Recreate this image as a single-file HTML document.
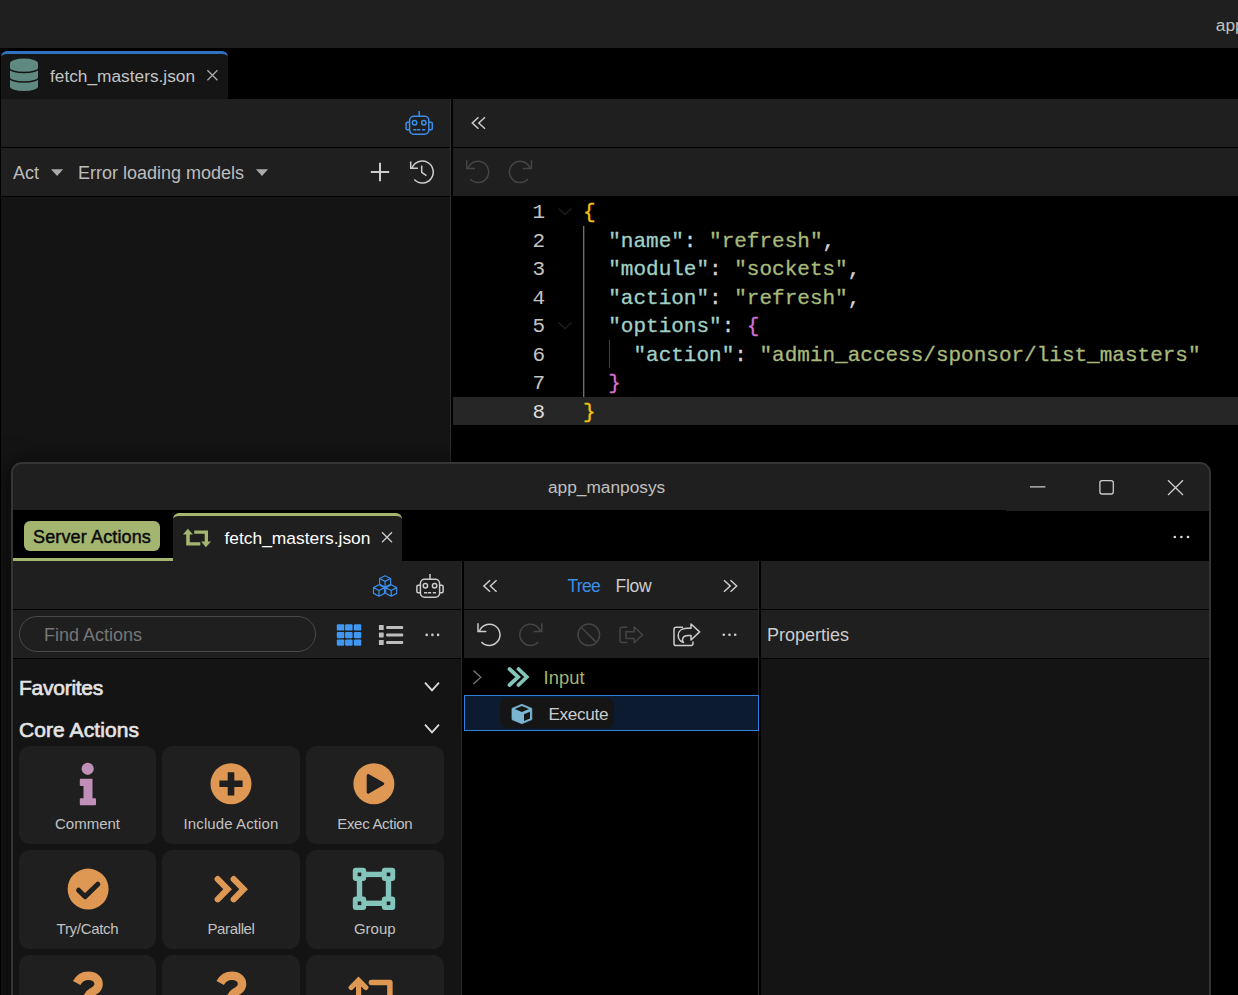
<!DOCTYPE html>
<html lang="en">
<head>
<meta charset="utf-8">
<title>app_manposys</title>
<style>
*{box-sizing:border-box;margin:0;padding:0}
html,body{width:1238px;height:995px;overflow:hidden;background:#000;}
body{position:relative;font-family:"Liberation Sans",sans-serif;color:#ccc;font-size:17px;}
.abs{position:absolute}
.t{position:absolute;white-space:nowrap;line-height:1;}
svg{position:absolute;overflow:visible}
/* ---------- main window ---------- */
#titlebar{left:0;top:0;width:1238px;height:48px;background:#1f1f1f}
#tabbar{left:0;top:48px;width:1238px;height:51px;background:#000}
#tab1{left:1px;top:51px;width:227px;height:48px;background:#151515;border-top:3px solid #2f72c4;border-radius:6px 6px 0 0}
#lp-t1{left:1px;top:99px;width:449px;height:48px;background:#1f1f1f}
#lp-t2{left:1px;top:148px;width:449px;height:48px;background:#1f1f1f}
#lp-body{left:1px;top:197px;width:449px;height:800px;background:#141414}
#rp-t1{left:453px;top:99px;width:785px;height:48px;background:#1f1f1f}
#rp-t2{left:453px;top:148px;width:785px;height:48px;background:#1f1f1f}
#code{left:453px;top:197px;width:785px;height:300px;background:#000;font-family:"Liberation Mono",monospace;font-size:21px;}
#code .ln{position:absolute;left:0;width:785px;height:28.5px;line-height:28.5px;white-space:pre;margin-top:2px}
#code .num{position:absolute;left:0;width:92px;text-align:right;color:#c4c4c4}
#code .num.cur{color:#ddd}
#code .src{position:absolute;left:130px;-webkit-text-stroke:0.3px}
.k{color:#a0d0c6}.s{color:#a8ba7a}.p{color:#d4d4d4}.b1{color:#f5c211}.b2{color:#d670d6}
/* ---------- floating window ---------- */
#win{left:11px;top:462px;width:1200px;height:560px;border:2px solid #353535;border-radius:11px;background:#1f1f1f;overflow:hidden;box-shadow:0 2px 22px 4px rgba(0,0,0,.5)}
#win .in{position:absolute;left:-13px;top:-464px;width:1238px;height:995px}

#w-title{left:13px;top:463px;width:1197px;height:47px;background:#1f1f1f}
#w-tabbar{left:13px;top:510px;width:1197px;height:51px;background:#000}
#w-pill{left:24px;top:521px;width:136px;height:30px;background:#a3b56e;border-radius:6px}
#w-ul{left:13px;top:558px;width:160px;height:3px;background:#a3b56e}
#w-tab{left:173px;top:513px;width:229px;height:48px;background:#1f1f1f;border-top:3px solid #a3b56e;border-radius:6px 6px 0 0}
.bar{background:#1f1f1f}
.card{position:absolute;width:137px;height:98px;background:#1f1f1f;border-radius:11px}
.card .lb{position:absolute;left:0;width:100%;text-align:center;top:70px;font-size:15px;line-height:1;color:#c2c2c2;white-space:nowrap}
</style>
</head>
<body>
<!-- main window -->
<div class="abs" id="titlebar"></div>
<div class="t" style="left:1215.800px;top:17px;font-size:17.3px;color:#c0c0c0">app_manposys</div>
<div class="abs" id="tabbar"></div>
<div class="abs" id="tab1"></div>
<div class="t" id="tab1txt" style="left:50px;top:68px;font-size:17.3px;color:#c4c4c4">fetch_masters.json</div>
<div class="abs" id="lp-t1"></div>
<div class="abs" id="lp-t2"></div>
<div class="abs" id="lp-body"></div>
<div class="t" style="left:13px;top:164px;font-size:18px;color:#bdbdbd">Act</div>
<div class="t" style="left:78px;top:164px;font-size:18px;color:#bdbdbd">Error loading models</div>
<div class="abs" style="left:450px;top:99px;width:1px;height:900px;background:#2e2e2e"></div>
<div class="abs" id="rp-t1"></div>
<div class="abs" id="rp-t2"></div>
<div class="abs" id="code">
  <div class="abs" style="left:0;top:200px;width:785px;height:28px;background:#262626"></div>
  <div class="ln" style="top:0px"><span class="num">1</span><span class="src"><span class="b1">{</span></span></div>
  <div class="ln" style="top:28.5px"><span class="num">2</span><span class="src">  <span class="k">"name"</span><span class="p">: </span><span class="s">"refresh"</span><span class="p">,</span></span></div>
  <div class="ln" style="top:57px"><span class="num">3</span><span class="src">  <span class="k">"module"</span><span class="p">: </span><span class="s">"sockets"</span><span class="p">,</span></span></div>
  <div class="ln" style="top:85.5px"><span class="num">4</span><span class="src">  <span class="k">"action"</span><span class="p">: </span><span class="s">"refresh"</span><span class="p">,</span></span></div>
  <div class="ln" style="top:114px"><span class="num">5</span><span class="src">  <span class="k">"options"</span><span class="p">: </span><span class="b2">{</span></span></div>
  <div class="ln" style="top:142.5px"><span class="num">6</span><span class="src">    <span class="k">"action"</span><span class="p">: </span><span class="s">"admin_access/sponsor/list_masters"</span></span></div>
  <div class="ln" style="top:171px"><span class="num">7</span><span class="src">  <span class="b2">}</span></span></div>
  <div class="ln" style="top:199.5px"><span class="num cur">8</span><span class="src"><span class="b1">}</span></span></div>
</div>

<svg id="svg-main" width="1238" height="995" viewBox="0 0 1238 995" style="left:0;top:0">
<!-- database icon -->
<g>
<path d="M10 63.5 a14 4.9 0 0 1 28 0 V86.400 a14 4.600 0 0 1 -28 0 Z" fill="#5f8a82"/>
<path d="M9.500 68.200 a14.500 4.200 0 0 0 29 0 M9.500 77.800 a14.500 4.200 0 0 0 29 0" fill="none" stroke="#151515" stroke-width="1.5"/>
</g>
<path d="M207.4 70.3 L217.4 80.3 M217.4 70.3 L207.4 80.3" fill="none" stroke="#aaa" stroke-width="1.3"/>
<g fill="none" stroke="#3b8eea" stroke-width="1.5" stroke-linecap="butt" stroke-linejoin="round">
<rect x="409.6" y="116.2" width="19.2" height="18" rx="4.2"/>
<path d="M419.2 111 V116.2"/>
<path d="M409.6 122.2 h-2.3 a1.2 1.2 0 0 0 -1.2 1.2 v5.2 a1.2 1.2 0 0 0 1.2 1.2 h2.3"/>
<path d="M428.8 122.2 h2.3 a1.2 1.2 0 0 1 1.2 1.2 v5.2 a1.2 1.2 0 0 1 -1.2 1.2 h-2.3"/>
<circle cx="414.6" cy="122.8" r="2.2"/>
<circle cx="423.8" cy="122.8" r="2.2"/>
<path d="M413.2 129.8 h3.2 M417.1 129.8 h3.3 M422.0 129.8 h3.2" stroke-width="1.6"/>
</g>
<path d="M478.5 117.3 L472.3 123 L478.5 128.7 M485.0 117.3 L478.8 123 L485.0 128.7" fill="none" stroke="#ccc" stroke-width="1.5"/>
<path d="M51 169.2 h12.2 l-6.1 6.8 z" fill="#aaa"/>
<path d="M255.9 169.2 h12.2 l-6.1 6.8 z" fill="#aaa"/>
<path d="M370.8 172 H389.2 M380 162.8 V181.2" stroke="#ccc" stroke-width="2" fill="none"/>
<!-- history -->
<g fill="none" stroke="#ccc" stroke-width="1.5">
<path d="M410.7 161.4 V168.3 H418"/>
<path d="M411.900 168.300 A11 11 0 1 1 414.300 179.600"/>
<path d="M421.700 165.400 V172.300 L426.400 175.600"/>
</g>
<g fill="none" stroke="#454545" stroke-width="1.5" stroke-linecap="butt" stroke-linejoin="miter">
<path d="M466.7 160.3 V168.6 H475.1"/>
<path d="M468.0 168.6 A10.6 10.6 0 1 1 470.2 179.0"/></g>
<g fill="none" stroke="#454545" stroke-width="1.5" stroke-linecap="butt" stroke-linejoin="miter">
<path d="M531.4 160.3 V168.6 H523.0"/>
<path d="M530.1 168.6 A10.6 10.6 0 1 0 527.9 179.0"/></g>
<!-- fold chevrons -->
<path d="M558.500 208.500 l6.500 6 l6.500 -6 M558.500 322.500 l6.500 6 l6.500 -6" fill="none" stroke="#1e1e1e" stroke-width="1.3"/>
<!-- indent guides -->
<path d="M583.700 226 V397" stroke="#747474" stroke-width="1.3"/>
<path d="M609.500 340 V368" stroke="#404040" stroke-width="1"/>
</svg>
<!-- floating window -->
<div class="abs" id="win"><div class="in">

<div class="abs" id="w-title"></div>
<div class="abs" style="left:13px;top:510px;width:1197px;height:490px;background:#000"></div>
<div class="t" id="w-titletxt" style="left:548px;top:479px;font-size:17.3px;color:#c0c0c0">app_manposys</div>
<div class="abs" id="w-tabbar"></div>
<div class="abs" style="left:1006px;top:510px;width:204px;height:1px;background:#1f1f1f"></div>
<div class="abs" id="w-pill"></div>
<div class="t" id="w-pilltxt" style="left:33px;top:527.500px;font-size:18px;letter-spacing:0.14px;color:#0a0a0a;-webkit-text-stroke:0.45px #0a0a0a">Server Actions</div>
<div class="abs" id="w-ul"></div>
<div class="abs" id="w-tab"></div>
<div class="t" id="w-tabtxt" style="left:224.500px;top:530px;font-size:17.4px;color:#fff">fetch_masters.json</div>
<!-- left panel -->
<div class="abs bar" style="left:13px;top:561px;width:448px;height:48px"></div>
<div class="abs bar" style="left:13px;top:610px;width:448px;height:48px"></div>
<div class="abs" style="left:13px;top:659px;width:448px;height:340px;background:#141414"></div>
<div class="abs" style="left:19px;top:616px;width:297px;height:36px;border:1px solid #4a4a4a;border-radius:18px;background:#1f1f1f"></div>
<div class="t" style="left:44px;top:626px;font-size:18px;color:#777">Find Actions</div>
<div class="t" id="fav" style="left:19px;top:676.600px;font-size:21px;letter-spacing:-0.26px;color:#e4e4e4;-webkit-text-stroke:0.65px #e4e4e4">Favorites</div>
<div class="t" id="core" style="left:19px;top:718.600px;font-size:21px;letter-spacing:0.08px;color:#e4e4e4;-webkit-text-stroke:0.65px #e4e4e4">Core Actions</div>
<div class="card" style="left:19px;top:746px"><div class="lb">Comment</div></div>
<div class="card" style="left:162px;top:746px;width:138px"><div class="lb" style="letter-spacing:0.1px">Include Action</div></div>
<div class="card" style="left:306px;top:746px;width:137.5px"><div class="lb" style="letter-spacing:-0.3px">Exec Action</div></div>
<div class="card" style="left:19px;top:850px;height:99px"><div class="lb" style="top:71px;letter-spacing:-0.3px">Try/Catch</div></div>
<div class="card" style="left:162px;top:850px;height:99px;width:138px"><div class="lb" style="top:71px;letter-spacing:-0.35px">Parallel</div></div>
<div class="card" style="left:306px;top:850px;height:99px;width:137.5px"><div class="lb" style="top:71px">Group</div></div>
<div class="card" style="left:19px;top:955px"></div>
<div class="card" style="left:162px;top:955px;width:138px"></div>
<div class="card" style="left:306px;top:955px;width:137.5px"></div>
<!-- separators -->
<div class="abs" style="left:461px;top:561px;width:3px;height:440px;background:#000"></div>
<div class="abs" style="left:758px;top:561px;width:3px;height:440px;background:#000"></div>
<div class="abs" style="left:461px;top:561px;width:1px;height:440px;background:#292929"></div>
<div class="abs" style="left:758px;top:561px;width:1px;height:440px;background:#292929"></div>
<!-- middle panel -->
<div class="abs bar" style="left:464px;top:561px;width:294px;height:48px"></div>
<div class="abs bar" style="left:464px;top:610px;width:294px;height:48px"></div>
<div class="abs" style="left:464px;top:658px;width:294px;height:340px;background:#000"></div>
<div class="t" style="left:567.500px;top:577.500px;font-size:17.5px;letter-spacing:-0.7px;color:#3b8eea">Tree</div>
<div class="t" style="left:615.500px;top:577.500px;font-size:17.5px;letter-spacing:-0.28px;color:#ccc">Flow</div>
<div class="t" style="left:543.500px;top:669px;font-size:18.4px;letter-spacing:0.05px;color:#a3b56e">Input</div>
<div class="abs" style="left:464px;top:695px;width:295px;height:36px;background:#0c1b30;border:1px solid #2f7fdd"></div>
<div class="abs" style="left:500px;top:698px;width:114px;height:30px;background:#151515;border-radius:7px"></div>
<div class="t" style="left:548.500px;top:705.500px;font-size:17.2px;letter-spacing:-0.35px;color:#ccc">Execute</div>
<!-- right panel -->
<div class="abs bar" style="left:761px;top:561px;width:449px;height:48px"></div>
<div class="abs bar" style="left:761px;top:610px;width:449px;height:48px"></div>
<div class="abs" style="left:761px;top:659px;width:449px;height:340px;background:#141414"></div>
<div class="t" style="left:767px;top:626px;font-size:18px;color:#ccc">Properties</div>
<svg id="svg-win" width="1238" height="995" viewBox="0 0 1238 995" style="left:0;top:0">
<!-- window controls -->
<path d="M1030 486.8 H1045.4" stroke="#ccc" stroke-width="1.3"/>
<rect x="1099.9" y="480.6" width="13.4" height="13.4" rx="2.2" fill="none" stroke="#ccc" stroke-width="1.3"/>
<path d="M1168 480.2 L1183 495 M1183 480.2 L1168 495" stroke="#ccc" stroke-width="1.3"/>
<g transform="translate(182.9 528.7) scale(1)" fill="#a3b56e">
<path d="M5 0 L10.1 5.9 H6.9 V13.6 H17.4 V16.8 H3.3 V5.9 H0 Z"/>
<path d="M11.3 1.9 H25.1 V12.8 H28.1 L23 18.5 L18.2 12.8 H21.8 V5.1 H11.3 Z"/>
</g>
<path d="M382 532.3 L392 542.3 M392 532.3 L382 542.3" fill="none" stroke="#ccc" stroke-width="1.3"/>
<circle cx="1174.8" cy="537" r="1.3" fill="#ddd"/><circle cx="1181.4" cy="537" r="1.3" fill="#ddd"/><circle cx="1188.0" cy="537" r="1.3" fill="#ddd"/>
<!-- cubes -->
<g fill="none" stroke="#3b8eea" stroke-width="1.2" stroke-linejoin="round">
<path d="M385.1 575.7 L390.6 578.55 V584.25 L385.1 587.10 L379.6 584.25 V578.55 Z M379.6 578.55 L385.1 581.40 L390.6 578.55 M385.1 581.40 V587.10"/>
<path d="M379 584.8 L384.5 587.65 V593.35 L379 596.20 L373.5 593.35 V587.65 Z M373.5 587.65 L379 590.50 L384.5 587.65 M379 590.50 V596.20"/>
<path d="M391.2 584.8 L396.7 587.65 V593.35 L391.2 596.20 L385.7 593.35 V587.65 Z M385.7 587.65 L391.2 590.50 L396.7 587.65 M391.2 590.50 V596.20"/>
</g>
<g fill="none" stroke="#ccc" stroke-width="1.5" stroke-linecap="butt" stroke-linejoin="round">
<rect x="420.4" y="579.2" width="19.2" height="18" rx="4.2"/>
<path d="M430 574 V579.2"/>
<path d="M420.4 585.2 h-2.3 a1.2 1.2 0 0 0 -1.2 1.2 v5.2 a1.2 1.2 0 0 0 1.2 1.2 h2.3"/>
<path d="M439.6 585.2 h2.3 a1.2 1.2 0 0 1 1.2 1.2 v5.2 a1.2 1.2 0 0 1 -1.2 1.2 h-2.3"/>
<circle cx="425.4" cy="585.8" r="2.2"/>
<circle cx="434.6" cy="585.8" r="2.2"/>
<path d="M424.0 592.8 h3.2 M427.9 592.8 h3.3 M432.8 592.8 h3.2" stroke-width="1.6"/>
</g>
<!-- grid icon -->
<g fill="#3f97f2">
<rect x="336.8" y="624.3" width="7.5" height="6.3" rx="1.2"/><rect x="345.1" y="624.3" width="7.5" height="6.3" rx="1.2"/><rect x="353.8" y="624.3" width="7.5" height="6.3" rx="1.2"/><rect x="336.8" y="631.9" width="7.5" height="6.3" rx="1.2"/><rect x="345.1" y="631.9" width="7.5" height="6.3" rx="1.2"/><rect x="353.8" y="631.9" width="7.5" height="6.3" rx="1.2"/><rect x="336.8" y="639.4" width="7.5" height="6.3" rx="1.2"/><rect x="345.1" y="639.4" width="7.5" height="6.3" rx="1.2"/><rect x="353.8" y="639.4" width="7.5" height="6.3" rx="1.2"/>
</g>
<!-- list icon -->
<g fill="#bdbdbd">
<rect x="378.9" y="625.0" width="4.8" height="5" rx="0.6"/><rect x="386.1" y="626.0" width="17.1" height="3" rx="1"/><rect x="378.9" y="632.4" width="4.8" height="5" rx="0.6"/><rect x="386.1" y="633.4" width="17.1" height="3" rx="1"/><rect x="378.9" y="640.0" width="4.8" height="5" rx="0.6"/><rect x="386.1" y="641.0" width="17.1" height="3" rx="1"/>
</g>
<circle cx="426.7" cy="634.9" r="1.3" fill="#ccc"/><circle cx="432.4" cy="634.9" r="1.3" fill="#ccc"/><circle cx="438.1" cy="634.9" r="1.3" fill="#ccc"/>
<path d="M425 682.7 L432 690.3 L439 682.7" fill="none" stroke="#ddd" stroke-width="1.8"/>
<path d="M425 724.7 L432 732.3 L439 724.7" fill="none" stroke="#ddd" stroke-width="1.8"/>
<!-- card icons -->
<g fill="#c08fb8">
<circle cx="87.7" cy="768.8" r="6.1"/>
<path d="M80.800 778.800 H92.500 V798.200 H95 a1 1 0 0 1 1 1 V804.200 a1 1 0 0 1 -1 1 H80.800 a1 1 0 0 1 -1 -1 V799.200 a1 1 0 0 1 1 -1 H83.500 V786 H80.800 a1 1 0 0 1 -1 -1 V779.800 a1 1 0 0 1 1 -1 Z"/>
</g>
<circle cx="231" cy="783.8" r="20.5" fill="#de9853"/>
<path d="M219.400 783.800 H242.600 M231 772.200 V795.400" stroke="#1f1f1f" stroke-width="6.6" stroke-linecap="butt" fill="none"/>
<circle cx="373.9" cy="783.8" r="20.5" fill="#de9853"/>
<path d="M368.200 775.600 L382.800 783.800 L368.200 792.200 Z" fill="#1f1f1f" stroke="#1f1f1f" stroke-width="3" stroke-linejoin="round"/>
<circle cx="88.1" cy="889.1" r="20.5" fill="#de9853"/>
<path d="M78.600 890.200 L85 896.600 L97.800 884.200" stroke="#1f1f1f" stroke-width="5" stroke-linecap="round" stroke-linejoin="round" fill="none"/>
<path d="M217.700 879.100 L227.600 889.200 L217.700 899.300 M233.700 879.100 L243.600 889.200 L233.700 899.300" stroke="#de9853" stroke-width="6.200" stroke-linecap="round" stroke-linejoin="miter" fill="none"/>
<!-- group -->
<rect x="359.5" y="874.4" width="29" height="28.9" fill="none" stroke="#83c5bb" stroke-width="5.4"/>
<g fill="#83c5bb">
<rect x="352.8" y="867.7" width="13.4" height="13.4" rx="3"/><rect x="352.8" y="896.6" width="13.4" height="13.4" rx="3"/><rect x="381.8" y="867.7" width="13.4" height="13.4" rx="3"/><rect x="381.8" y="896.6" width="13.4" height="13.4" rx="3"/>
</g>
<g fill="#1f1f1f">
<rect x="357.7" y="872.6" width="3.6" height="3.6"/><rect x="357.7" y="901.5" width="3.6" height="3.6"/><rect x="386.7" y="872.6" width="3.6" height="3.6"/><rect x="386.7" y="901.5" width="3.6" height="3.6"/>
</g>
<path d="M76.7 983.0 C79.3 978.2 83.5 975.7 88.4 975.7 C94.2 975.7 98.6 979.3 98.6 984.0 C98.6 988.6 95.0 990.4 91.8 992.2 C89.6 993.5 88.0 995.0 87.4 997.5" fill="none" stroke="#de9853" stroke-width="8.4" stroke-linecap="butt"/>
<path d="M220.2 983.0 C222.8 978.2 227.0 975.7 231.9 975.7 C237.7 975.7 242.1 979.3 242.1 984.0 C242.1 988.6 238.5 990.4 235.3 992.2 C233.1 993.5 231.5 995.0 230.9 997.5" fill="none" stroke="#de9853" stroke-width="8.4" stroke-linecap="butt"/>
<path d="M351.200 987.500 L358.500 980.200 L365.800 987.500 M358.600 981 V1000" stroke="#de9853" stroke-width="5.200" stroke-linecap="round" stroke-linejoin="miter" fill="none"/>
<path d="M371.400 982.450 H389.900 V1000" stroke="#de9853" stroke-width="5.500" stroke-linecap="round" stroke-linejoin="round" fill="none"/>
<!-- middle toolbar -->
<path d="M490.1 580.3 L483.9 586 L490.1 591.7 M496.6 580.3 L490.4 586 L496.6 591.7" fill="none" stroke="#ccc" stroke-width="1.5" />
<path d="M724.0 580.3 L730.2 586 L724.0 591.7 M730.5 580.3 L736.7 586 L730.5 591.7" fill="none" stroke="#ccc" stroke-width="1.5" />
<g fill="none" stroke="#ccc" stroke-width="1.5">
<path d="M478 623.2 V631.5 H486.4"/>
<path d="M479.3 631.5 A10.6 10.6 0 1 1 481.5 641.9"/></g>
<g fill="none" stroke="#454545" stroke-width="1.5">
<path d="M541.8 623.2 V631.5 H533.4"/>
<path d="M540.5 631.5 A10.6 10.6 0 1 0 538.3 641.9"/></g>
<g fill="none" stroke="#454545" stroke-width="1.5">
<circle cx="588.8" cy="634.8" r="10.8"/>
<path d="M581.200 627.200 L596.400 642.400"/>
<path d="M627.400 627.200 H622 a2 2 0 0 0 -2 2 V640.500 a2 2 0 0 0 2 2 H627.400"/>
<path d="M626 631.800 H634.200 V627 L642.600 634.800 L634.200 642.800 V638.400 H626 Z" stroke-linejoin="round"/>
</g>
<g fill="none" stroke="#ccc" stroke-width="1.5" stroke-linejoin="round">
<path d="M683 627.200 H676.200 a2.200 2.200 0 0 0 -2.200 2.200 V643.400 a2.200 2.200 0 0 0 2.200 2.200 H690.800 a2.200 2.200 0 0 0 2.200 -2.200 V641.500"/>
<path d="M691 624 L699.600 631.900 L691 640 V635.600 H688.500 C684.500 635.600 682.500 637.600 682.500 640 C682.500 641.200 683 642 683.500 642.600 C680.800 641.500 678.200 638.600 678.200 635.400 C678.200 630.800 682 628.200 687 628.200 H691 Z"/>
</g>
<circle cx="723.8" cy="634.8" r="1.3" fill="#ccc"/><circle cx="729.5" cy="634.8" r="1.3" fill="#ccc"/><circle cx="735.2" cy="634.8" r="1.3" fill="#ccc"/>
<!-- tree -->
<path d="M473.500 670.400 L480.800 677.200 L473.500 684" fill="none" stroke="#777" stroke-width="1.3"/>
<path d="M509.500 669 L518.200 677 L509.500 685 M518.500 669 L526.800 677 L518.500 685" fill="none" stroke="#83c5bb" stroke-width="3.800" stroke-linecap="round" stroke-linejoin="miter"/>
<!-- cube solid -->
<g>
<path d="M521.900 704.300 L531.800 708.400 V719.600 L521.900 723.700 L512 719.600 V708.400 Z" fill="#7ab4d0" stroke="#7ab4d0" stroke-width="0.8" stroke-linejoin="round"/>
<path d="M521.900 706 L529 709 L521.900 712 L514.800 709 Z" fill="#151515"/>
<path d="M524 714.300 L530 711.800 V718.500 L524 721 Z" fill="#151515"/>
</g>
</svg>
</div></div>
</body>
</html>
